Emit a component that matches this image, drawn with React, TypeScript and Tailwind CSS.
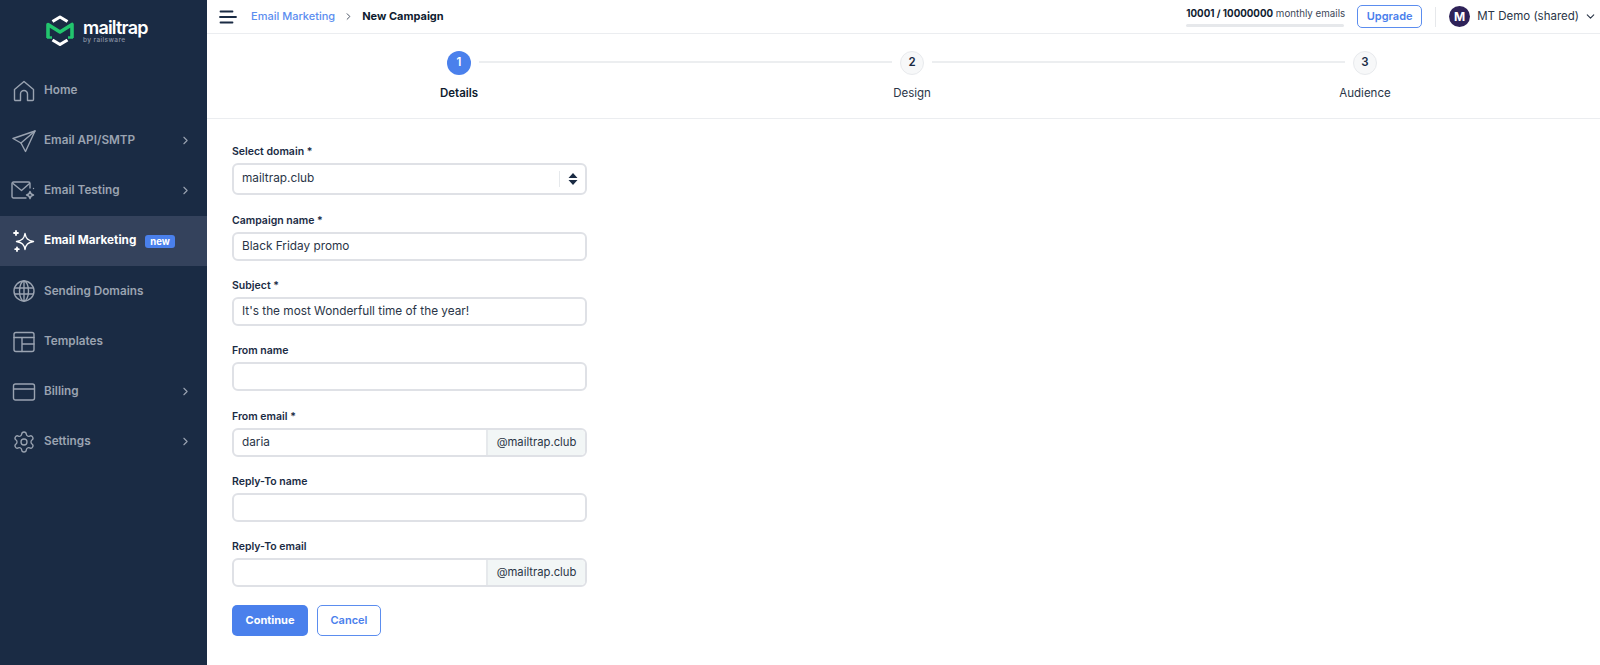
import { ChevronDown, ChevronRight, Settings } from "lucide-react";
import type { ReactNode } from "react";

const iconClass = "h-[24px] w-[24px] shrink-0";

function Svg({ children, className = iconClass }: { children: ReactNode; className?: string }) {
  return (
    <svg viewBox="0 0 24 24" fill="none" stroke="currentColor" strokeWidth="1.4" strokeLinecap="round" strokeLinejoin="round" className={className}>
      {children}
    </svg>
  );
}

const HomeIcon = () => (
  <Svg>
    <path d="M2.500 10.500 12 2.500l9.500 8v10a1 1 0 0 1-1 1h-5v-6.500a3.500 3.500 0 0 0-7 0v6.500h-5a1 1 0 0 1-1-1z" />
  </Svg>
);
const SendIcon = () => (
  <Svg>
    <path d="M23 2 1 9.500l8 4.500 4.500 8.500z" />
    <path d="M23 2 9 14" />
  </Svg>
);
const TestingIcon = () => (
  <Svg className="h-[24px] w-[26px] shrink-0 -ml-[2px]">
    <path d="M15 19H2.500A1.500 1.500 0 0 1 1 17.500v-13A1.500 1.500 0 0 1 2.500 3h15A1.500 1.500 0 0 1 19 4.500V9" />
    <path d="m2 4.500 8.500 7L18.500 4.500" />
    <path d="M19 12.500c.4 2.200 1.300 3.100 3.500 3.500-2.200.4-3.100 1.300-3.500 3.500-.4-2.200-1.300-3.100-3.500-3.500 2.200-.4 3.100-1.300 3.500-3.500z" />
    <path d="M22.500 9.500h.01" />
  </Svg>
);
const SparkIcon = () => (
  <Svg>
    <path d="M13 4.500c.9 5 2.800 7 8.500 8-5.700 1-7.600 3-8.500 8-.9-5-2.800-7-8.500-8 5.700-1 7.600-3 8.500-8z" />
    <path d="M4 2v4M2 4h4M5 18.500V22M3.200 20.200h3.600" strokeWidth="1.800" />
  </Svg>
);
const GlobeIcon = () => (
  <Svg>
    <circle cx="12" cy="12" r="10" />
    <ellipse cx="12" cy="12" rx="4.500" ry="10" />
    <path d="M12 2v20M2.500 9h19M2.500 15h19" />
  </Svg>
);
const TemplateIcon = () => (
  <Svg>
    <rect x="2" y="2.500" width="20" height="19" rx="2" />
    <path d="M2 7.500h20M10 7.500v14M10 14h12" />
  </Svg>
);
const BillingIcon = () => (
  <Svg>
    <rect x="1.500" y="4" width="21" height="16" rx="2" />
    <path d="M1.500 9h21" />
  </Svg>
);

const navItems = [
  { label: "Home", icon: <HomeIcon /> },
  { label: "Email API/SMTP", icon: <SendIcon />, chevron: true },
  { label: "Email Testing", icon: <TestingIcon />, chevron: true },
  { label: "Email Marketing", icon: <SparkIcon />, active: true },
  { label: "Sending Domains", icon: <GlobeIcon /> },
  { label: "Templates", icon: <TemplateIcon /> },
  { label: "Billing", icon: <BillingIcon />, chevron: true },
  { label: "Settings", icon: <Settings className={iconClass} strokeWidth={1.300} />, chevron: true },
];

const steps = [
  { n: "1", label: "Details", active: true },
  { n: "2", label: "Design" },
  { n: "3", label: "Audience" },
];

function Logo() {
  return (
    <div className="flex h-[65.500px] items-center pl-[46px] pb-[5px]">
      <svg viewBox="0 0 28 31" className="h-[31px] w-[28px] shrink-0" fill="none">
        <path d="M6.500 6.500 14 2l7.500 4.500" stroke="#fff" strokeWidth="3.200" strokeLinejoin="round" />
        <path d="M6.500 25 14 29.500l7.500-4.500" stroke="#fff" strokeWidth="3.200" strokeLinejoin="round" />
        <path d="M2 23V9.500l12 7.500 12-7.500V23" stroke="#22c56e" strokeWidth="3.600" strokeLinejoin="round" />
        <path d="M1 22.500h5M22 22.500h5" stroke="#22c56e" strokeWidth="2.400" />
      </svg>
      <div className="ml-[9px] mt-[2px] flex flex-col">
        <span className="text-[18px] font-semibold leading-[20px] tracking-[-0.8px] text-white">mailtrap</span>
        <span className="-mt-[2px] text-[6.500px] font-medium leading-[8px] tracking-[0.4px] text-[#8a95a6]">by railsware</span>
      </div>
    </div>
  );
}

function Sidebar() {
  return (
    <aside className="flex w-[207px] shrink-0 flex-col bg-[#1a2b44]">
      <Logo />
      <nav className="flex flex-col">
        {navItems.map((item) => (
          <div
            key={item.label}
            className={`flex h-[50.200px] items-center pl-[12px] pr-[15px] ${item.active ? "bg-[#34425c] text-white" : "text-[#9aa3b1]"}`}
          >
            {item.icon}
            <span className={`ml-[8px] text-[11.750px] ${item.active ? "font-bold" : "font-semibold"}`}>{item.label}</span>
            {item.active && (
              <span className="ml-[9px] rounded-[3px] bg-[#4a80ec] px-[5px] text-[9.500px] font-bold leading-[13px] text-white">new</span>
            )}
            {item.chevron && <ChevronRight className="ml-auto h-[13px] w-[13px]" strokeWidth={2} />}
          </div>
        ))}
      </nav>
    </aside>
  );
}

function TopBar() {
  return (
    <header className="flex h-[34px] items-center border-b border-[#ebedf0] pl-[12px] pr-[3px]">
      <svg viewBox="0 0 18 14" className="h-[14px] w-[18px]" stroke="#1a2b44" strokeWidth="1.800" strokeLinecap="round">
        <path d="M1.500 1.500h12M1 7h16M1.500 12.500h12" />
      </svg>
      <span className="ml-[14px] text-[11px] font-medium text-[#5b8def]">Email Marketing</span>
      <ChevronRight className="ml-[8px] h-[11px] w-[11px] text-[#3c4656]" strokeWidth={2} />
      <span className="ml-[8px] text-[11px] font-bold text-[#0f1c30]">New Campaign</span>
      <div className="ml-auto flex flex-col">
        <span className="whitespace-nowrap text-[9.750px] leading-[14px] text-[#3c4656]">
          <b className="font-bold text-[#0f1c30]">10001 / 10000000</b> monthly emails
        </span>
        <div className="mt-[3px] h-[3px] w-[158px] rounded-full bg-[#e6e8eb]" />
      </div>
      <button className="ml-[12px] h-[23px] w-[65px] rounded-[5px] border border-[#5b8def] text-[11px] font-semibold text-[#4a80ec]">Upgrade</button>
      <div className="ml-[13px] h-[20px] w-px bg-[#e6e8eb]" />
      <div className="ml-[13px] flex h-[21px] w-[21px] items-center justify-center rounded-full bg-[#2e2258] text-[12px] font-bold text-white">M</div>
      <span className="ml-[7px] whitespace-nowrap text-[11.500px] text-[#2a3547]">MT Demo (shared)</span>
      <ChevronDown className="ml-[5px] h-[13px] w-[13px] text-[#2a3547]" strokeWidth={2} />
    </header>
  );
}

function Stepper() {
  return (
    <div className="flex h-[85px] items-start border-b border-[#ebedf0] pl-[232px] pr-[215px] pt-[17px]">
      {steps.map((step, i) => (
        <div key={step.n} className={`flex items-start ${i < 2 ? "flex-1" : ""}`}>
          <div className="flex w-[40px] shrink-0 flex-col items-center">
            <div
              className={`flex h-[24px] w-[24px] items-center justify-center rounded-full text-[11.500px] font-semibold ${
                step.active ? "bg-[#4a80ec] text-white" : "border border-[#e8eaed] bg-[#f7f8f9] text-[#1a2b44]"
              }`}
            >
              {step.n}
            </div>
            <span className={`mt-[10px] whitespace-nowrap text-[11.500px] leading-[16px] ${step.active ? "font-semibold text-[#0f1c30]" : "text-[#2a3547]"}`}>
              {step.label}
            </span>
          </div>
          {i < 2 && <div className="mt-[10px] h-[2px] flex-1 bg-[#eceef0]" />}
        </div>
      ))}
    </div>
  );
}

function Field({ label, value = "", addon, className = "mt-[16px]" }: { label: string; value?: string; addon?: boolean; className?: string }) {
  return (
    <div className={className}>
      <label className="block text-[10.500px] font-semibold leading-[18px] text-[#1a2b44]">{label}</label>
      <div className="mt-[2px] flex h-[29px] overflow-hidden rounded-[6px] border-2 border-[#dfe1e6] text-[11.800px] text-[#2a3547]">
        <div className="flex flex-1 items-center pl-[8px]">{value}</div>
        {addon && <div className="flex w-[99px] items-center justify-center border-l-2 border-[#e6e9ec] bg-[#f2f6f6] text-[11.250px]">@mailtrap.club</div>}
      </div>
    </div>
  );
}

function CampaignForm() {
  return (
    <form className="ml-[25px] w-[355px] pt-[24px]">
      <div>
        <label className="block text-[10.500px] font-semibold leading-[18px] text-[#1a2b44]">Select domain *</label>
        <div className="mt-[2px] flex h-[32px] items-center rounded-[6px] border-2 border-[#dfe1e6] pl-[8px] text-[11.800px] text-[#2a3547]">
          mailtrap.club
          <div className="ml-auto flex h-[16px] w-[26px] items-center justify-center border-l border-[#e6e9ec]">
            <svg viewBox="0 0 10 14" className="h-[14px] w-[10px]" fill="#1a2b44">
              <path d="M5 1 9.500 6H.5zM5 13 .5 8h9z" />
            </svg>
          </div>
        </div>
      </div>
      <Field label="Campaign name *" value="Black Friday promo" className="mt-[17px]" />
      <Field label="Subject *" value="It's the most Wonderfull time of the year!" />
      <Field label="From name" />
      <Field label="From email *" value="daria" addon className="mt-[17px]" />
      <Field label="Reply-To name" />
      <Field label="Reply-To email" addon />
      <div className="mt-[18px] flex gap-[9px]">
        <button type="button" className="h-[31px] w-[76px] rounded-[5px] bg-[#4a80ec] text-[11px] font-bold text-white">Continue</button>
        <button type="button" className="h-[31px] w-[64px] rounded-[5px] border border-[#5b8def] text-[11px] font-semibold text-[#4a80ec]">Cancel</button>
      </div>
    </form>
  );
}

export default function App() {
  return (
    <div className="flex h-[665px] w-[1600px] overflow-hidden bg-white font-['Inter',sans-serif]">
      <Sidebar />
      <main className="flex min-w-0 flex-1 flex-col">
        <TopBar />
        <Stepper />
        <CampaignForm />
      </main>
    </div>
  );
}
